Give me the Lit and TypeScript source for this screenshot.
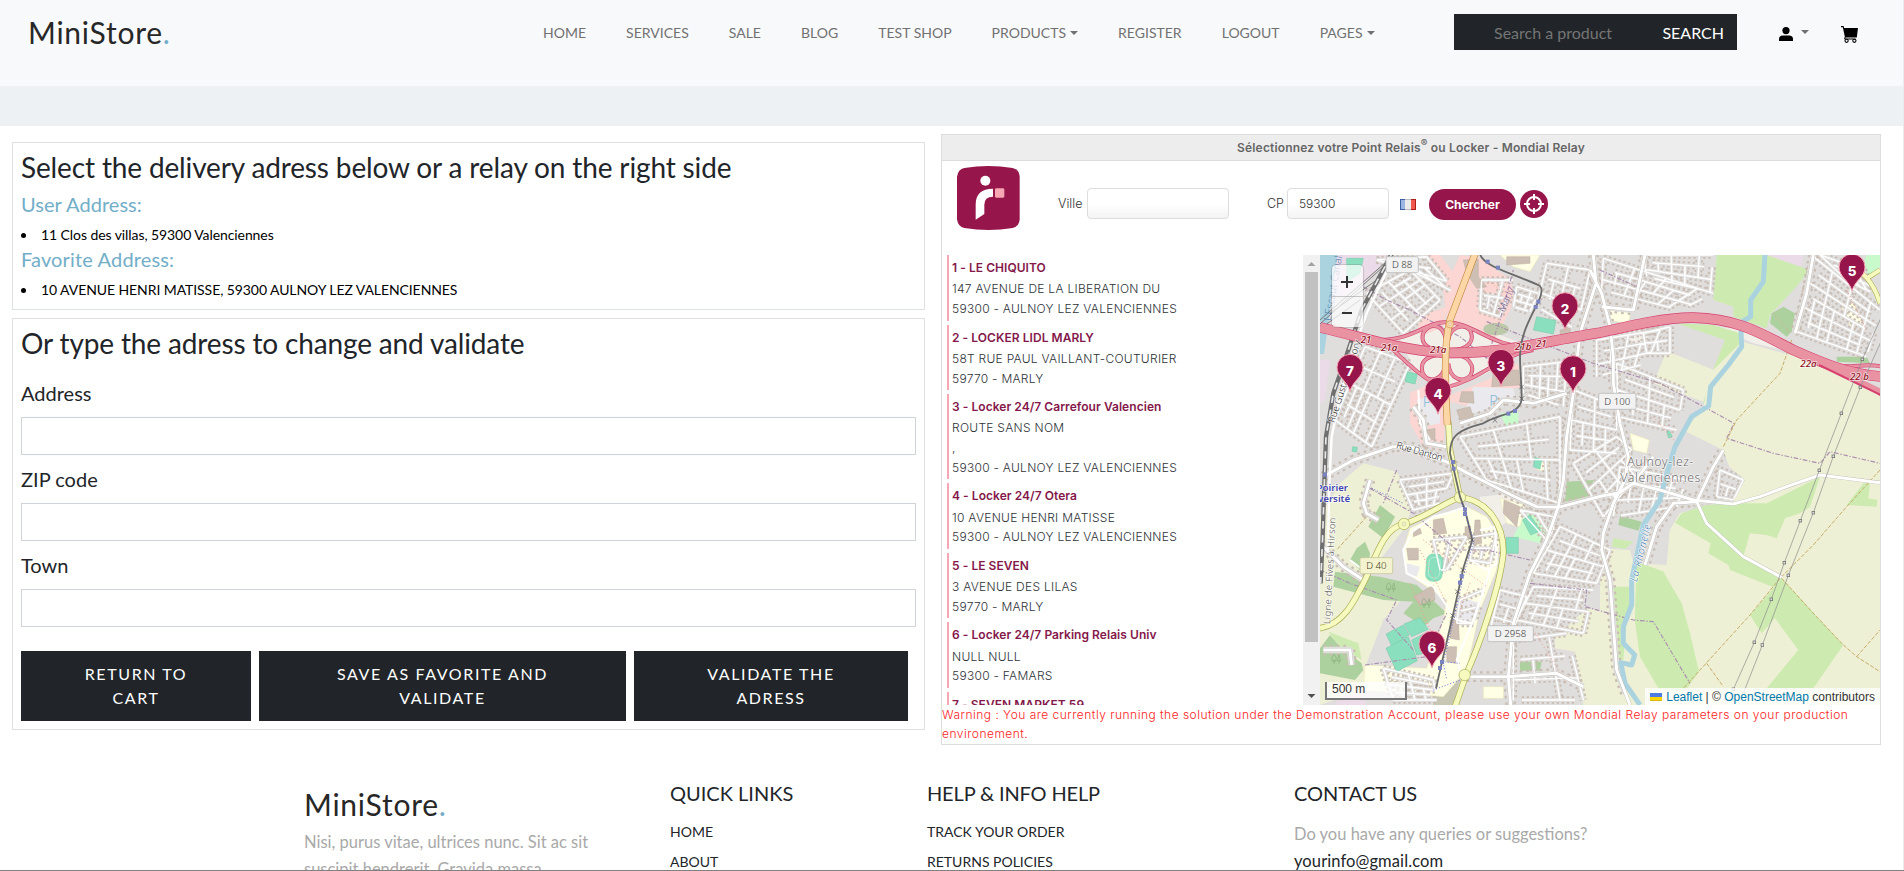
import { LitElement, html, css, svg } from "lit";
import { customElement } from "lit/decorators.js";

type Pt = [number, number];

/* ---------- map data (one map pixel = 3 units) ---------- */

const farmland = [
  "1100,303 1242,360 1210,455 1060,400",
  "1325,275 1450,310 1560,330 1740,420 1740,1365 960,1365 1100,945 1110,840 1140,790 1300,755 1335,690 1288,650 1270,600 1160,545 1170,500 1210,475 1230,370",
  "765,1165 860,1075 900,1080 900,895 990,900 1000,940 1100,945 1060,1365 850,1365 825,1205 765,1195",
  "60,800 120,700 190,640 290,665 320,720 330,790 310,840 200,980 330,1020 250,1110 200,1240 190,1320 60,1365",
];
const meadow = [
  "1250,15 1400,15 1530,60 1480,120 1410,195 1400,235 1300,200 1300,170 1240,150",
  "1130,220 1240,225 1320,250 1315,330 1285,360 1320,372 1310,390 1280,385 1240,460 1210,460 1235,370 1275,270",
  "1200,510 1230,530 1210,568 1170,545",
  "1220,765 1320,760 1400,760 1560,680 1530,770 1500,790 1455,805 1430,865 1400,855 1350,850 1330,920 1445,990 1420,1012 1290,960 1285,945 1225,910 1232,880 1125,818 1145,790",
  "1640,765 1690,700 1710,700 1705,745 1732,750 1730,770",
  "1350,1095 1445,985 1630,1185 1540,1315 1400,1315 1495,1200 1425,1105 1385,1150",
  "1010,935 1090,965 1145,1060 1170,1150 1197,1265 1150,1330 1075,1315 1020,1220 1005,1110",
  "940,1010 1000,1010 980,1110 970,1230 945,1230",
  "940,865 1000,875 975,897 935,890",
  "85,1145 175,1180 185,1230 120,1190",
  "60,70 90,90 70,140 60,140",
];
const forest = [
  "1450,170 1485,190 1475,245 1460,260 1410,220 1415,190",
  "960,798 1025,815 1015,842 955,825",
  "800,695 880,690 875,750 795,755",
  "240,765 285,800 250,865 205,830",
  "195,875 210,910 205,950 180,960 150,930 170,895",
  "105,965 240,980 350,1005 440,1090 400,1105 370,1130 310,1090 340,1055 250,1050 100,1010",
  "60,1195 90,1155 120,1190 185,1240 190,1260 165,1290 60,1270",
  "1610,320 1700,320 1710,340 1610,335",
  "660,1235 725,1235 720,1262 660,1262",
];
const campus = [
  "330,835 400,800 500,770 560,800 600,860 590,960 540,1080 500,1260 430,1340 190,1320 195,1245 380,1255 430,1110 440,1050 320,970 310,900",
  "600,745 675,765 660,830 620,820",
  "925,165 995,175 985,220 920,210",
  "1625,170 1660,160 1690,215 1655,238",
  "990,550 1048,570 1040,610 1000,600",
  "600,15 720,15 690,65 640,50",
  "715,620 748,630 745,665 712,660",
  "550,1310 610,1310 610,1345 550,1345",
];
const retail = [
  "430,120 480,15 540,25 625,85 650,140 620,200 580,280 520,230 440,215",
  "350,200 440,170 430,230 360,260",
  "330,430 390,400 440,440 430,600 370,590 330,520",
  "440,440 560,390 655,340 660,410 590,430 510,470 450,455",
  "380,15 420,15 470,80 450,110 400,50",
];
const pitches = [
  "710,200 768,212 760,252 700,240",
  "322,365 352,372 345,402 315,395",
  "705,622 725,630 720,658 700,650",
  "158,590 172,592 170,606 156,604",
  "140,25 190,25 180,70 140,95",
  "258,1152 310,1125 328,1155 275,1188",
  "312,1122 360,1103 385,1138 335,1160",
  "258,1195 325,1160 352,1232 290,1265",
  "335,1170 385,1145 395,1205 350,1215",
  "618,862 655,862 655,910 618,910",
  "690,795 722,842 692,855 668,810",
  "1100,545 1108,543 1117,560 1106,564",
];
const buildings = [
  "580,360 655,360 660,405 575,410", "485,425 520,425 522,460 478,455",
  "490,30 535,28 535,80 560,110 530,115 500,70", "620,20 690,20 690,40 620,45",
  "400,810 430,805 440,850 400,855", "320,895 355,895 355,930 325,930",
  "340,840 360,835 365,850 340,860", "525,810 540,810 545,880 520,885",
  "495,830 512,828 512,865 495,860", "450,1110 475,1110 478,1170 450,1165",
  "440,1190 470,1190 468,1240 440,1235", "612,750 660,770 650,830 610,790",
  "470,480 510,470 520,500 480,510", "380,540 405,535 405,570 378,565",
  "780,240 810,235 812,250 782,256", "340,1040 400,1005 405,1050 360,1065",
];
/* Street blocks: four corners, then number of streets along and across. */
const blocks: [Pt, Pt, Pt, Pt, number, number][] = [
  [[195, 290], [330, 340], [215, 590], [105, 510], 4, 6],
  [[200, 130], [310, 250], [420, 150], [330, 60], 4, 6],
  [[230, 30], [380, 20], [470, 130], [330, 60], 3, 4],
  [[545, 90], [640, 90], [600, 200], [540, 180], 2, 3],
  [[650, 110], [715, 130], [690, 185], [640, 170], 3, 3],
  [[670, 350], [800, 335], [790, 470], [670, 430], 3, 5],
  [[480, 560], [780, 500], [780, 760], [560, 690], 4, 6],
  [[740, 40], [870, 60], [830, 240], [710, 170], 3, 4],
  [[910, 25], [1240, 130], [1140, 180], [905, 120], 3, 7],
  [[1030, 15], [1240, 15], [1230, 125], [1040, 80], 3, 5],
  [[890, 270], [1080, 240], [1040, 340], [890, 380], 3, 4],
  [[950, 340], [1150, 420], [1130, 540], [955, 500], 4, 4],
  [[1540, 20], [1740, 180], [1700, 320], [1490, 245], 6, 7],
  [[1560, 15], [1690, 60], [1720, 130], [1640, 90], 3, 4],
  [[1030, 250], [1110, 230], [1110, 310], [1040, 310], 2, 2],
  [[660, 780], [760, 800], [760, 840], [740, 870], 1, 2],
  [[780, 830], [930, 900], [890, 1000], [700, 970], 4, 6],
  [[700, 1010], [880, 1020], [850, 1150], [650, 1110], 4, 5],
  [[600, 1020], [680, 1040], [630, 1160], [570, 1140], 3, 2],
  [[640, 1170], [800, 1150], [850, 1350], [640, 1350], 3, 3],
  [[820, 640], [950, 560], [1040, 640], [910, 800], 4, 4],
  [[960, 650], [1160, 690], [1130, 770], [940, 800], 3, 5],
  [[1260, 660], [1330, 690], [1300, 750], [1250, 740], 2, 2],
  [[820, 420], [950, 470], [950, 610], [810, 600], 4, 4],
  [[300, 690], [460, 670], [420, 760], [340, 780], 4, 4],
  [[250, 1255], [400, 1290], [410, 1350], [280, 1350], 4, 4],
  [[400, 870], [500, 860], [440, 960], [420, 960], 1, 2],
  [[520, 860], [590, 850], [570, 940], [510, 930], 2, 2],
  [[480, 1050], [550, 1020], [520, 1120], [470, 1120], 2, 1],
];
const mix = (a: Pt, b: Pt, t: number): Pt => [a[0] + (b[0] - a[0]) * t, a[1] + (b[1] - a[1]) * t];
const streetPath = blocks
  .map(([a, b, c, d, n, m]) => {
    let s = "";
    for (let i = 0; i <= n; i++) {
      const t = i / n;
      const p = mix(a, d, t), q = mix(b, c, t);
      const k = i % 2 ? 0.12 : 0;
      const p1 = mix(p, q, k), q1 = mix(p, q, 1 - k);
      s += `M${p1[0]},${p1[1]}L${q1[0]},${q1[1]}`;
    }
    for (let j = 0; j <= m; j++) {
      const t = j / m;
      const from = j % 2 ? Math.floor(n / 2) / n : 0;
      const to = j % 3 === 1 ? Math.ceil(n / 2) / n : 1;
      const lo = Math.min(from, to), hi = Math.max(from, to, lo + 0.4);
      const top = mix(a, b, t), bot = mix(d, c, t);
      const p = mix(top, bot, lo), q = mix(top, bot, Math.min(hi, 1));
      s += `M${p[0]},${p[1]}L${q[0]},${q[1]}`;
    }
    return s;
  })
  .join("");

const mainStreets =
  "M70,680L160,630L280,590L330,590L450,640L500,668L640,738L710,770L775,772L905,738L960,728L1000,700L1060,620" +
  "M880,15L888,100L840,250L820,430L800,560L790,690L775,770L740,870L690,970L640,1120L625,1280L632,1365" +
  "M870,60L905,130L930,230L940,320L940,400L960,520L985,620L975,690L940,760L910,850L905,900L930,990L940,1130L950,1260L990,1365" +
  "M940,740L1000,700L1080,720L1180,750L1300,762L1380,740L1460,710L1560,675L1740,698" +
  "M1190,755L1220,820L1330,920L1445,982" +
  "M1190,755L1240,650L1270,600M1190,755L1120,760L1070,830L1035,945" +
  "M1540,15L1520,130L1485,250M905,170L1000,180L1035,15" +
  "M60,880L130,950L190,990M70,1200L150,1200L155,1245M500,1280L620,1280L770,1270L850,1310" +
  "M210,690L190,760L200,790L235,810M340,470L370,510L380,580L440,590M480,520L570,490L610,450L700,460L800,430";
const motorway = "M60,232C200,265 300,300 430,308C600,315 750,270 900,248C1000,225 1100,202 1180,203C1320,206 1390,255 1480,300C1580,345 1650,372 1745,380";
const ramps =
  "M240,270C340,270 380,215 435,217C520,215 570,290 690,292" +
  "M270,290C330,350 400,412 440,412C550,385 600,315 700,300" +
  "M430,300C370,300 360,270 372,245C395,215 430,225 438,270M448,300C510,300 525,270 510,240C490,220 450,230 445,270" +
  "M430,312C370,318 360,340 368,370C385,400 430,395 437,340M448,312C510,312 525,350 512,375C490,400 450,390 445,340" +
  "M1560,335C1640,365 1690,335 1745,350M1600,360C1650,385 1700,400 1745,434";
const ring = "M60,1135C130,1122 160,1060 200,980C240,880 265,830 312,822C380,800 430,760 480,742C560,750 612,820 610,910C600,1010 540,1180 500,1270L465,1370M445,515L450,600L480,742";
const trunk = "M525,12L450,210C430,290 436,400 442,525";
const river = "M1395,12L1390,95L1352,150L1352,200L1322,218L1325,290L1285,345L1232,410L1226,468L1175,500L1125,590L1095,690L1080,750L1030,825L995,990L995,1065L970,1130L970,1180L1004,1215L995,1245L962,1238L975,1300L1020,1365";
const tram = "M540,12C550,50 640,70 720,108C740,130 690,190 672,250C650,310 665,360 665,450C655,495 600,490 550,520C470,540 450,560 450,610L480,740L495,780L517,870L490,955L460,1090L425,1240L408,1315";
const boundary =
  "M190,110L260,150L330,180L480,260L560,325L600,210L640,60M560,215L700,270L880,340L1080,400L1220,475L1302,520L1280,565L1420,610L1560,640L1590,605L1740,640" +
  "M900,60L1010,110L1035,15M210,715L340,790L470,900L560,900L690,930M690,1000L860,1020L855,1070L1000,1110L1060,1115L1170,1300" +
  "M290,660L250,760M60,960L150,1000L290,1050L260,1110L340,1200M195,1245L380,1220L440,1090";
const tracks =
  "M1475,270L1440,370L1310,510L1270,590M1740,660L1640,770L1540,885L1440,985L1350,1095L1150,1315M1445,985L1540,1090L1630,1185L1670,1220L1740,1265M1670,1220L1740,1140M1220,1240L1270,1310M200,800L110,900";
const powerA: Pt[] = [[1758, 170], [1687, 328], [1624, 490], [1558, 661], [1501, 812], [1453, 938], [1414, 1048], [1363, 1177], [1300, 1318]];
const powerB: Pt[] = [[1770, 215], [1681, 412], [1600, 619], [1540, 788], [1465, 976], [1387, 1185], [1330, 1330]];
const pins: [number, number, number][] = [
  [2, 795, 239], [3, 603, 409], [1, 819, 428], [7, 150, 424], [4, 414, 493], [5, 1656, 123], [6, 396, 1254],
];
const junctions: [string, number, number][] = [
  ["21", 182, 280], ["21a", 243, 303], ["21a", 390, 309], ["21b", 645, 300], ["21", 708, 292], ["22a", 1501, 350], ["22 b", 1650, 391],
];
const shields: [string, number, number, number, boolean][] = [
  ["D 88", 258, 20, 97, false], ["D 100", 896, 430, 112, false], ["D 40", 180, 923, 98, true], ["D 2958", 563, 1127, 137, false],
];

@customElement("relay-map")
export class RelayMap extends LitElement {
  static styles = css`
    :host { display: block; position: relative; width: 560px; height: 450px; overflow: hidden; }
    svg.canvas { display: block; width: 560px; height: 450px; }
    .lbl { font-family: "Noto Sans", sans-serif; }
    .halo { paint-order: stroke fill; stroke: #fff; stroke-width: 5px; stroke-linejoin: round; stroke-opacity: .7; }
    .pin { font: 800 40px Inter, sans-serif; fill: #fff; text-anchor: middle; }
    .zoom { position: absolute; left: 12px; top: 10px; width: 31px; height: 62px; border-radius: 4px; background: rgba(255,255,255,.72); box-shadow: 0 0 0 1px rgba(120,120,120,.28); display: grid; grid-template-rows: 1fr 1fr; }
    .zoom span { display: grid; place-items: center; }
    .zoom span + span { border-top: 1px solid rgba(150,150,150,.5); }
    .zoom svg { width: 12px; height: 12px; margin-right: 2px; margin-top: 2px; }
    .scale { position: absolute; left: 5px; bottom: 5px; width: 78px; height: 16px; border: 2px solid #777; border-top: 0; background: rgba(255,255,255,.75); font: 12px/15px "Liberation Sans", Arial, sans-serif; color: #333; text-indent: 5px; }
    .attr { position: absolute; right: 0; bottom: 0; height: 17px; padding: 0 5px; display: flex; align-items: center; background: rgba(255,255,255,.8); font: 12px/16px "Liberation Sans", Arial, sans-serif; color: #333; white-space: pre; }
    .attr b { font-weight: 400; color: #0078a8; }
    .attr svg { width: 12px; height: 8px; margin-right: 4px; }
  `;
  poly(list: string[], fill: string, stroke = "none") {
    return svg`<g fill=${fill} stroke=${stroke} stroke-width="1.5">${list.map((p) => svg`<polygon points=${p}></polygon>`)}</g>`;
  }
  line(d: string, color: string, w: number, dash = "none") {
    return svg`<path d=${d} stroke=${color} stroke-width=${w} stroke-dasharray=${dash} fill="none" stroke-linejoin="round"></path>`;
  }
  render() {
    const rail = "M275,12L185,180L135,330L100,430L78,560L73,700L68,860L62,1000";
    return html`<svg class="canvas" viewBox="60 15 1680 1350">
      <rect x="60" y="15" width="1680" height="1350" fill="#dfdedd"></rect>
      ${this.poly(["100,15 265,15 200,95 90,160", "60,330 90,330 75,450 60,460", "120,1270 165,1260 200,1365 110,1365", "1400,15 1510,15 1500,60 1450,45"], "#ebdbe8")}
      ${this.poly(["300,270 400,215 500,215 690,290 560,370 440,425 340,350", "950,240 1050,230 1040,290 960,260", "540,740 640,730 660,790 600,830 540,770", "1240,230 1340,240 1450,300 1360,280"], "#f2efe9")}
      ${this.poly(["390,1270 480,1290 460,1365 400,1365"], "#c7c7b4")}
      ${this.poly(["1700,15 1740,15 1740,50 1705,75 1690,40", "680,780 745,830 720,880 640,860", "600,490 655,485 655,530 620,535"], "#c8facc")}
      ${this.poly(farmland, "#eef0d5")}${this.poly(meadow, "#cdebb0")}${this.poly(forest, "#add19e")}
      ${this.poly(campus, "#ffffe5", "#ece6b0")}${this.poly(retail, "#fbd6d2")}
      <ellipse cx="588" cy="237" rx="38" ry="19" fill="#bcc9a8"></ellipse>
      ${this.poly(["520,410 640,415 650,460 560,480 470,500 500,470", "350,450 420,430 420,520 370,530", "320,940 360,950 350,980 320,970", "480,1040 540,1060 510,1120 470,1110", "540,130 600,130 600,180 540,180"], "#eaeaee")}
      <polygon points="60,15 112,15 88,200 72,312 60,312" fill="#aad3df"></polygon>
      ${this.line(streetPath, "#c9bcb2", 23, "7 8")}
      ${this.line(streetPath, "#dfdedd", 12)}
      ${this.line(mainStreets, "#c9bcb2", 32, "8 12")}
      ${this.line(mainStreets, "#dfdedb", 19)}
      ${this.poly(farmland.slice(1, 2), "#eef0d5")}${this.poly(meadow.slice(3, 7), "#cdebb0")}
      ${this.poly(buildings, "#cdbfb3", "#bcaea2")}
      ${this.poly(pitches, "#8ae0be", "#74c5a5")}
      <g transform="rotate(4 404 952)"><rect x="378" y="912" width="50" height="82" rx="20" fill="#8ae0be" stroke="#74c5a5"></rect><rect x="386" y="922" width="34" height="62" rx="15" fill="none" stroke="#c8f3e0" stroke-width="2"></rect></g>
      ${this.line(streetPath, "#fff", 4.4)}
      ${this.line("M355,420L360,520L390,570M150,930L190,960M330,860L310,900L320,970L400,1010L470,1110L515,1120M540,840L585,830L590,940L560,960L510,930M480,1260L470,1230L520,1110L570,960M500,770L440,790L400,800L330,850", "#fff", 6)}
      ${this.line("M360,900L440,1060M370,870L560,1010M510,1000L480,1080M330,1000L400,1160M1060,500L1130,580M1420,190L1470,250M130,420L210,330M600,120L560,90M1640,120L1700,240M700,1140L800,1300", "#f59a90", 3, "3 7")}
      ${this.line(boundary, "#ab8fb0", 3.5, "14 5 4 5")}
      ${this.line(tracks, "#c9ab66", 3, "12 5")}
      ${this.line(river, "#aad3df", 15)}
      ${this.line(mainStreets, "#bcb8b4", 11)}${this.line(mainStreets, "#fff", 9)}
      ${this.line("M60,210L265,30M60,222L250,50M90,190L230,90M62,235L180,150", "#777", 3)}
      ${this.line(rail, "#6f6f6f", 13)}${this.line(rail, "#e8e8e8", 5, "22 20")}
      ${this.line("M262,60L200,190L165,290L120,440L95,560L88,700L84,900", "#fff", 7)}
      ${this.line(ring, "#a9ab52", 19)}${this.line(ring, "#f7fabf", 15)}
      ${this.line("M1740,160C1725,110 1700,80 1680,65L1640,15M1700,85L1740,60", "#a9ab52", 15)}${this.line("M1740,160C1725,110 1700,80 1680,65L1640,15M1700,85L1740,60", "#f7fabf", 12)}
      ${this.line(ramps, "#d24a76", 12)}${this.line(ramps, "#e892a2", 8)}
      ${this.line(motorway, "#d8406f", 32)}${this.line(motorway, "#e892a2", 28)}
      ${this.line("M1560,340L1745,430", "#d8406f", 18)}${this.line("M1540,325L1745,425", "#e892a2", 14)}
      ${this.line(trunk, "#b9792d", 21)}${this.line(trunk, "#fcd6a4", 18)}
      <circle cx="450" cy="223" r="11" fill="#fcd6a4" stroke="#b9792d" stroke-width="1.5"></circle><circle cx="450" cy="223" r="4" fill="#f2efe9" stroke="#b9792d"></circle>
      ${[[312, 822], [494, 1275], [480, 742]].map(([x, y]) => svg`<circle cx=${x} cy=${y} r="17" fill="#f7fabf" stroke="#a9ab52" stroke-width="2"></circle>`)}
      <circle cx="312" cy="822" r="6" fill="#eef0d5" stroke="#a9ab52"></circle>
      ${this.line(tram, "#6a6a6a", 5.5)}
      ${this.line("M485,760L522,870L495,960L465,1090L430,1240L440,1290M425,1235L480,1240M215,715L310,760M400,1320L480,1290", "#4a54d8", 2.5, "3 6")}
      ${[[563, 35], [594, 53], [715, 155], [707, 171], [645, 483], [625, 491], [459, 636], [461, 656], [75, 674], [495, 778], [495, 792], [485, 978], [480, 998], [426, 1236], [420, 1254]].map(([x, y]) => svg`<rect x=${x - 6} y=${y - 6} width="12" height="12" fill="#7a82c0"></rect>`)}
      ${[[665, 411], [665, 446], [585, 511], [515, 870], [488, 960], [472, 1025], [458, 1097]].map(([x, y]) => svg`<path d="M${x - 7},${y - 7}l14,14m0,-14l-14,14" stroke="#555" stroke-width="2"></path>`)}
      ${[powerA, powerB].map((p) => svg`${this.line("M" + p.map((q) => q.join()).join("L"), "#909090", 2.2)}${p.map(([x, y]) => svg`<rect x=${x - 4} y=${y - 4} width="8" height="8" fill="#ddd" stroke="#666" stroke-width="2"></rect>`)}`)}
      ${shields.map(([t, x, y, w, yellow]) => svg`<rect x=${x} y=${y} width=${w} height="48" rx="5" fill=${yellow ? "#f3f3cf" : "#f2f2f2"} stroke=${yellow ? "#c6c69a" : "#bbb"} stroke-width="2.5"></rect><text class="lbl" x=${x + w / 2} y=${y + 34} font-size="29" text-anchor="middle" fill=${yellow ? "#3a3a18" : "#333"}>${t}</text>`)}
      ${junctions.map(([t, x, y]) => svg`<text class="lbl halo" x=${x} y=${y} font-size="29" font-weight="500" font-style="italic" fill="#8c0f20">${t}</text>`)}
      <text class="lbl halo" font-size="29" fill="#222" transform="translate(287 594) rotate(16)" textLength="143">Rue Danton</text>
      <text class="lbl halo" font-size="29" fill="#222" transform="translate(103 520) rotate(-72)">Rue Gustave Delory</text>
      <text class="lbl" font-size="31" fill="#7d6a9c" transform="translate(612 188) rotate(-66)">Marly</text>
      <text class="lbl" font-size="31" fill="#4f7db4" transform="translate(92 214) rotate(-80)">L'Escaut Canalisé</text>
      <text class="lbl halo" font-size="29" fill="#4145b0" font-weight="600" x="50" y="722">Poirier</text>
      <text class="lbl halo" font-size="29" fill="#4145b0" font-weight="600" x="54" y="757">versité</text>
      <text class="lbl halo" font-size="28" fill="#555" transform="translate(90 1123) rotate(-87)" textLength="320">Ligne de Fives à Hirson</text>
      <text class="lbl halo" font-size="30" font-style="italic" fill="#3f7ab5" transform="translate(1010 997) rotate(-76)" textLength="176">La Rhonelle</text>
      <text class="lbl" font-size="44" fill="#86b9da" x="568" y="469">P</text><text class="lbl" font-size="44" fill="#86b9da" x="368" y="471">P</text>
      <g class="lbl halo" font-size="37" fill="#6a6a6a" text-anchor="middle"><text x="1081" y="648" textLength="198">Aulnoy-lez-</text><text x="1081" y="696" textLength="240">Valenciennes</text></g>
      <g stroke="#86ab7a" stroke-width="2" fill="none">${[[272, 1015], [378, 1062], [108, 1230]].map(([x, y]) => svg`<path d="M${x - 6},${y + 12}v-14m-6,5q-4,-12 6,-20q10,8 6,20zM${x + 9},${y + 12}v-12m-5,2l5,-18l5,18z"></path>`)}</g>
      ${pins.map(([n, x, y]) => svg`<path d="M${x},${y}C${x - 8},${y - 32} ${x - 39},${y - 42} ${x - 39},${y - 72}A39,39 0 0 1 ${x + 39},${y - 72}C${x + 39},${y - 42} ${x + 8},${y - 32} ${x},${y}Z" fill="#96154a" stroke="#f7a6b4" stroke-width="3"></path><text class="pin" x=${x} y=${y - 46}>${n}</text>`)}
    </svg>
    <div class="zoom"><span><svg viewBox="0 0 12 12"><path d="M6 0v12M0 6h12" stroke="#333" stroke-width="2"></path></svg></span><span><svg viewBox="0 0 12 12"><path d="M1 6h10" stroke="#333" stroke-width="2"></path></svg></span></div>
    <div class="scale">500 m</div>
    <div class="attr"><svg viewBox="0 0 12 8"><path fill="#4C7BE1" d="M0 0h12v4H0z"></path><path fill="#FFD500" d="M0 4h12v3H0z"></path><path fill="#E0BC00" d="M0 7h12v1H0z"></path></svg><b>Leaflet</b> | © <b>OpenStreetMap</b> contributors</div>`;
  }
}

const relays: { name: string; lines: string[] }[] = [
  { name: "1 - LE CHIQUITO", lines: ["147 AVENUE DE LA LIBERATION DU", "59300 - AULNOY LEZ VALENCIENNES"] },
  { name: "2 - LOCKER LIDL MARLY", lines: ["58T RUE PAUL VAILLANT-COUTURIER", "59770 - MARLY"] },
  { name: "3 - Locker 24/7 Carrefour Valencien", lines: ["ROUTE SANS NOM", ",", "59300 - AULNOY LEZ VALENCIENNES"] },
  { name: "4 - Locker 24/7 Otera", lines: ["10 AVENUE HENRI MATISSE", "59300 - AULNOY LEZ VALENCIENNES"] },
  { name: "5 - LE SEVEN", lines: ["3 AVENUE DES LILAS", "59770 - MARLY"] },
  { name: "6 - Locker 24/7 Parking Relais Univ", lines: ["NULL NULL", "59300 - FAMARS"] },
  { name: "7 - SEVEN MARKET 59", lines: [] },
];

@customElement("relay-widget")
export class RelayWidget extends LitElement {
  static styles = css`
    :host { display: block; box-sizing: border-box; width: 940px; height: 611px; border: 1px solid #ddd; background: #fff; font: 300 12px/19px Inter, "Open Sans", sans-serif; color: #333; }
    .title { height: 25px; border-bottom: 1px solid #ddd; background: #ededed; text-align: center; font-weight: 600; line-height: 25px; color: #666; letter-spacing: .17px; }
    .title sup { font-size: 10px; line-height: 0; vertical-align: 5px; }
    .search { display: flex; height: 89px; padding: 5px 0 0 15px; align-items: flex-start; }
    .logo { width: 63px; height: 64px; margin-right: 38px; flex: none; }
    .label { margin-top: 28px; width: 29px; font-size: 12.5px; letter-spacing: 0; }
    .cp { width: 20px; margin-left: 38px; }
    .field { box-sizing: border-box; margin-top: 22px; height: 31px; width: 142px; border: 1px solid #ddd; border-radius: 4px; background: linear-gradient(#fff 50%, #f4f4f4); line-height: 29px; padding-left: 11px; }
    .zip { width: 102px; }
    .flag { width: 16px; height: 11px; margin: 33px 13px 0 11px; }
    .go { box-sizing: border-box; width: 87px; height: 31px; margin-top: 23px; border-radius: 16px; background: #96154a; color: #fff; font-weight: 700; line-height: 31px; text-align: center; letter-spacing: 0; }
    .target { width: 28px; height: 28px; margin: 24px 0 0 4px; }
    .body { display: flex; height: 450px; }
    .list { width: 361px; height: 450px; overflow: hidden; display: flex; flex-direction: column; gap: 3.8px; }
    .item { flex: none; margin-left: 5px; border-left: 2px solid #f7a6b4; padding: 2px 0 2px 3px; line-height: 19.7px; letter-spacing: .28px; color: #2e3338; white-space: nowrap; }
    .name { font-weight: 600; line-height: 22.3px; color: #84184a; letter-spacing: .05px; }
    .bar { width: 17px; background: #f1f1f1; }
    .bar svg { display: block; width: 17px; height: 450px; }
    .warn { color: #f22; letter-spacing: .48px; line-height: 19px; }
  `;
  render() {
    return html`<div class="title">Sélectionnez votre Point Relais<sup>®</sup> ou Locker - Mondial Relay</div>
      <div class="search">
        <svg class="logo" viewBox="0 0 189 192"><path d="M22,6Q95,-6 167,6Q186,10 188,32V160Q186,182 167,186Q95,198 22,186Q3,182 0,160V32Q3,10 22,6Z" fill="#96154a"></path><circle cx="85" cy="44" r="15" fill="#fff"></circle><path d="M108,68V92Q82,92 82,116V144L56,161V116Q56,68 108,68Z" fill="#fff"></path><rect x="114" y="67" width="28" height="28" rx="4" fill="#f7a6b4"></rect></svg>
        <span class="label">Ville</span><div class="field"></div>
        <span class="label cp">CP</span><div class="field zip">59300</div>
        <svg class="flag" viewBox="0 0 16 11"><path fill="#4d78c9" d="M0 0h6v11H0z"></path><path fill="#9db5e3" d="M1 1h4v9H1z"></path><path fill="#ececec" d="M5 0h6v11H5z"></path><path fill="#d6271f" d="M11 0h5v11h-5z"></path><path fill="#f0574f" d="M11 1h4v9h-4z"></path><path fill="none" stroke="#000" stroke-opacity=".2" d="M.5.5h15v10H.5z"></path></svg>
        <div class="go">Chercher</div>
        <svg class="target" viewBox="0 0 28 28"><circle cx="14" cy="14" r="14" fill="#96154a"></circle><circle cx="14" cy="14" r="7" fill="none" stroke="#fff" stroke-width="2"></circle><path d="M14 4v6M14 18v6M4 14h6M18 14h6" stroke="#fff" stroke-width="2"></path></svg>
      </div>
      <div class="body">
        <div class="list">${relays.map((r) => html`<div class="item"><div class="name">${r.name}</div>${r.lines.map((l) => html`<div>${l}</div>`)}</div>`)}</div>
        <div class="bar"><svg viewBox="0 0 17 450"><path d="M8.5 7l4 4h-8z" fill="#a3a3a3"></path><rect x="2" y="17" width="13" height="370" fill="#c1c1c1"></rect><path d="M8.5 443l4-4h-8z" fill="#505050"></path></svg></div>
        <relay-map></relay-map>
      </div>
      <div class="warn">Warning : You are currently running the solution under the Demonstration Account, please use your own Mondial Relay parameters on your production environement.</div>`;
  }
}

const nav: [string, boolean][] = [
  ["HOME", false], ["SERVICES", false], ["SALE", false], ["BLOG", false], ["TEST SHOP", false],
  ["PRODUCTS", true], ["REGISTER", false], ["LOGOUT", false], ["PAGES", true],
];

@customElement("app-root")
export class AppRoot extends LitElement {
  static styles = css`
    :host { display: block; box-sizing: border-box; height: 871px; overflow: hidden; border-bottom: 1px solid #808080; background: #fff; font-family: Lato, sans-serif; color: #212529; }
    .page { box-sizing: border-box; height: 870px; overflow: hidden; border-right: 1px solid #e9ebee; }
    header { display: flex; align-items: center; height: 64px; padding: 0 0 22px 28px; background: #f8f9fb; }
    .brand { font-size: 30px; line-height: 36px; letter-spacing: .75px; color: #272727; white-space: nowrap; }
    .brand i { font-style: normal; color: #72aec8; }
    header .brand { width: 515px; }
    nav { display: flex; gap: 40px; width: 911px; padding-top: 1px; box-sizing: border-box; font-size: 14px; letter-spacing: .01px; color: #717171; }
    .caret { display: inline-block; border: 4px solid transparent; border-top-color: currentColor; border-bottom: 0; margin-left: 4px; vertical-align: 3px; color: #717171; }
    .find { display: flex; justify-content: space-between; align-items: center; box-sizing: border-box; width: 283px; height: 36px; padding: 0 13px 0 40px; background: #212529; color: #fff; font-size: 16px; }
    .find span { color: #757575; }
    .user { width: 14px; height: 14px; margin: 4px 4px 0 42px; }
    .cart { width: 17px; height: 17px; margin: 5px 0 0 32px; }
    .band { height: 40px; background: #edf1f3; }
    main { display: flex; align-items: flex-start; gap: 16px; padding: 8px 0 0 12px; height: 647px; }
    .left { width: 913px; padding-top: 8px; display: grid; gap: 8px; }
    section { box-sizing: border-box; border: 1px solid #dee2e6; padding: 7px 8px; }
    .known { height: 168px; }
    .form { height: 412px; }
    h2 { margin: 0; font-weight: 400; font-size: 28px; line-height: 34px; letter-spacing: -.14px; }
    h3 { margin: 0; font-weight: 400; font-size: 20px; line-height: 24px; letter-spacing: .05px; color: #72aec8; }
    .known h2 { margin-bottom: 8px; }
    ul { list-style: none; margin: 7px 0 0; padding: 0; font-size: 14px; line-height: 24px; letter-spacing: -.08px; color: #000; }
    li { display: flex; align-items: center; }
    li::before { content: ""; width: 5px; height: 5px; border-radius: 50%; background: #000; margin-right: 15px; }
    h3 + ul + h3 { letter-spacing: .15px; }
    label { display: block; font-size: 20px; line-height: 24px; margin-top: 12px; }
    .form h2 + label { margin-top: 21px; }
    .box { box-sizing: border-box; height: 38px; border: 1px solid #ced4da; margin-top: 12px; }
    .actions { display: flex; gap: 8px; margin-top: 24px; }
    .btn { box-sizing: border-box; height: 70px; padding-top: 11.4px; background: #212529; color: #fff; text-align: center; font-size: 16px; line-height: 23.2px; letter-spacing: 1.6px; }
    .b1 { width: 230px; } .b2 { width: 367px; } .b3 { width: 274px; }
    footer { display: flex; padding-left: 304px; }
    .c1 { width: 366px; padding-top: 5px; } .c2 { width: 257px; } .c3 { width: 367px; }
    h4 { margin: 0 0 12px; font-weight: 400; font-size: 20px; line-height: 24px; }
    .links { font-size: 14px; line-height: 30px; }
    .c3 h4 { letter-spacing: -.15px; }
    .copy { font-size: 16.5px; line-height: 27px; color: #a9a9a9; white-space: nowrap; }
    .c1 .copy { margin-top: 7px; }
    .c4 .copy { margin-top: 16px; }
    .mail { color: #212529; letter-spacing: .1px; }
  `;
  render() {
    return html`<div class="page">
      <header>
        <div class="brand">MiniStore<i>.</i></div>
        <nav>${nav.map(([t, drop]) => html`<span>${t}${drop ? html`<i class="caret"></i>` : ""}</span>`)}</nav>
        <div class="find"><span>Search a product</span>SEARCH</div>
        <svg class="user" viewBox="0 0 14 14"><circle cx="7" cy="3.6" r="3.6"></circle><path d="M0 14V12Q0 8.4 4 8.4H10Q14 8.4 14 12V14Z"></path></svg><i class="caret"></i>
        <svg class="cart" viewBox="0 0 17 17"><path d="M0 0h2.6l.5 2H17l-1.2 9.6H4L1.8 1.2H0z"></path><path d="M4.2 11l-.6 2h11" fill="none" stroke="#000"></path><circle cx="5.6" cy="14.8" r="1.6" fill="#fff" stroke="#000" stroke-width="1.1"></circle><circle cx="13.4" cy="14.8" r="1.6" fill="#fff" stroke="#000" stroke-width="1.1"></circle></svg>
      </header>
      <div class="band"></div>
      <main>
        <div class="left">
          <section class="known">
            <h2>Select the delivery adress below or a relay on the right side</h2>
            <h3>User Address:</h3><ul><li>11 Clos des villas, 59300 Valenciennes</li></ul>
            <h3>Favorite Address:</h3><ul><li>10 AVENUE HENRI MATISSE, 59300 AULNOY LEZ VALENCIENNES</li></ul>
          </section>
          <section class="form">
            <h2>Or type the adress to change and validate</h2>
            ${["Address", "ZIP code", "Town"].map((l) => html`<label>${l}</label><div class="box"></div>`)}
            <div class="actions"><div class="btn b1">RETURN TO<br />CART</div><div class="btn b2">SAVE AS FAVORITE AND<br />VALIDATE</div><div class="btn b3">VALIDATE THE<br />ADRESS</div></div>
          </section>
        </div>
        <relay-widget></relay-widget>
      </main>
      <footer>
        <div class="c1"><div class="brand">MiniStore<i>.</i></div><div class="copy">Nisi, purus vitae, ultrices nunc. Sit ac sit<br />suscipit hendrerit. Gravida massa</div></div>
        <div class="c2"><h4>QUICK LINKS</h4><div class="links">HOME<br />ABOUT</div></div>
        <div class="c3"><h4>HELP &amp; INFO HELP</h4><div class="links">TRACK YOUR ORDER<br />RETURNS POLICIES</div></div>
        <div class="c4"><h4>CONTACT US</h4><div class="copy">Do you have any queries or suggestions?<div class="mail">yourinfo@gmail.com</div></div></div>
      </footer>
    </div>`;
  }
}
